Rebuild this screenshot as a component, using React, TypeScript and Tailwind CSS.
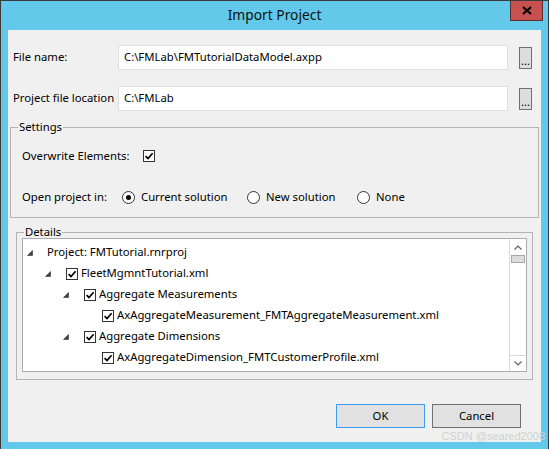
import React from 'react';

type Row = { level: number; expander: boolean; checkbox: boolean; text: string };

const rows: Row[] = [
  { level: 0, expander: true, checkbox: false, text: 'Project: FMTutorial.rnrproj' },
  { level: 1, expander: true, checkbox: true, text: 'FleetMgmntTutorial.xml' },
  { level: 2, expander: true, checkbox: true, text: 'Aggregate Measurements' },
  { level: 3, expander: false, checkbox: true, text: 'AxAggregateMeasurement_FMTAggregateMeasurement.xml' },
  { level: 2, expander: true, checkbox: true, text: 'Aggregate Dimensions' },
  { level: 3, expander: false, checkbox: true, text: 'AxAggregateDimension_FMTCustomerProfile.xml' },
  { level: 3, expander: false, checkbox: true, text: '' },
];

const indent = ['pl-0', 'pl-[18px]', 'pl-[36px]', 'pl-[54px]'];

function CheckBox() {
  return (
    <span className="flex h-[12px] w-[12px] shrink-0 items-center justify-center border border-[#333333] bg-white">
      <svg width="10" height="10" viewBox="0 0 10 10">
        <path d="M1.6 5.2 L4 7.6 L8.6 2.2" fill="none" stroke="#000" strokeWidth="1.7" />
      </svg>
    </span>
  );
}

function Radio({ on = false }: { on?: boolean }) {
  return (
    <span className="flex h-[13px] w-[13px] shrink-0 items-center justify-center rounded-full border border-[#333333] bg-white">
      {on && <span className="h-[5px] w-[5px] rounded-full bg-black" />}
    </span>
  );
}

function Expander() {
  return (
    <svg width="6" height="6" viewBox="0 0 6 6">
      <polygon points="5.5,0.5 5.5,5.5 0.5,5.5" fill="#444444" stroke="#333333" strokeWidth="0.6" />
    </svg>
  );
}

function Group({ title, className, children }: { title: string; className: string; children: React.ReactNode }) {
  return (
    <div className={`flex flex-col border border-[#b4b4b4] ${className}`}>
      <span className="-mt-[9px] ml-[7px] w-fit bg-[#f0f0f0] px-[1px] leading-[16px]">{title}</span>
      {children}
    </div>
  );
}

export default function App() {
  return (
    <div className="relative flex h-[449px] w-[549px] flex-col overflow-hidden border-x border-t border-[#3a3a3a] bg-[#63c9ea] font-['Noto_Sans',sans-serif] text-[11.3px] text-black">
      {/* タイトルバー */}
      <div className="relative flex h-[29px] shrink-0 items-center justify-center">
        <span className="text-[13.8px] text-[#111111]">Import Project</span>
        <button className="absolute right-[5px] top-0 flex h-[20px] w-[33px] items-center justify-center border-x border-b border-[#5a3030] bg-[#c75050]">
          <svg width="10" height="9" viewBox="0 0 10 9">
            <path d="M1 1 L9 8 M9 1 L1 8" stroke="#000" strokeWidth="2.2" />
          </svg>
        </button>
      </div>

      {/* クライアント領域 */}
      <div className="mx-[7px] flex h-[412px] flex-col bg-[#f0f0f0]">
        {/* ファイル名 */}
        <div className="mt-[15px] flex h-[25px] items-center">
          <span className="w-[110px] pl-[5px]">File name:</span>
          <div className="flex h-[25px] w-[390px] items-center border border-[#e0e0e0] bg-white pl-[5px]">
            C:\FMLab\FMTutorialDataModel.axpp
          </div>
          <button className="ml-[11px] flex h-[22px] w-[13px] items-end justify-center border border-[#707070] bg-[#dddddd] pb-[2px] leading-[10px]">
            ...
          </button>
        </div>

        {/* プロジェクトファイルの場所 */}
        <div className="mt-[16px] flex h-[25px] items-center">
          <span className="w-[110px] whitespace-nowrap pl-[5px]">Project file location</span>
          <div className="flex h-[25px] w-[390px] items-center border border-[#e0e0e0] bg-white pl-[5px]">
            C:\FMLab
          </div>
          <button className="ml-[11px] flex h-[22px] w-[13px] items-end justify-center border border-[#707070] bg-[#dddddd] pb-[2px] leading-[10px]">
            ...
          </button>
        </div>

        {/* 設定 */}
        <Group title="Settings" className="ml-[2px] mt-[16px] h-[91px] w-[529px]">
          <div className="ml-[11px] mt-[13px] flex h-[16px] items-center">
            <span className="w-[121px]">Overwrite Elements:</span>
            <CheckBox />
          </div>
          <div className="ml-[11px] mt-[25px] flex h-[16px] items-center">
            <span className="w-[100px]">Open project in:</span>
            <Radio on />
            <span className="ml-[6px] w-[106px]">Current solution</span>
            <Radio />
            <span className="ml-[6px] w-[91px]">New solution</span>
            <Radio />
            <span className="ml-[6px]">None</span>
          </div>
        </Group>

        {/* 詳細 */}
        <Group title="Details" className="ml-[8px] mt-[14px] h-[148px] w-[517px]">
          <div className="mx-[5px] mt-[-2px] flex h-[134px] overflow-hidden border border-[#abadb3] bg-white">
            <div className="flex-1 overflow-hidden pl-[4px] pt-[3px]">
              {rows.map((r, i) => (
                <div key={i} className={`flex h-[21px] items-center whitespace-nowrap ${indent[r.level]}`}>
                  <span className="flex w-[20px] shrink-0 items-center">{r.expander && <Expander />}</span>
                  {r.checkbox && (
                    <span className="ml-[1px] mr-[3px]">
                      <CheckBox />
                    </span>
                  )}
                  <span>{r.text}</span>
                </div>
              ))}
            </div>
            {/* スクロールバー */}
            <div className="flex w-[17px] shrink-0 flex-col border-l border-[#d9d9d9] bg-white">
              <div className="flex h-[16px] items-center justify-center">
                <svg width="8" height="5" viewBox="0 0 8 5">
                  <path d="M0.5 4.5 L4 1 L7.5 4.5" fill="none" stroke="#606060" strokeWidth="1.2" />
                </svg>
              </div>
              <div className="mx-[1px] h-[8px] border border-[#a8a8a8] bg-[#dcdcdc]" />
              <div className="flex-1" />
              <div className="flex h-[16px] items-center justify-center border-t border-[#d9d9d9]">
                <svg width="8" height="5" viewBox="0 0 8 5">
                  <path d="M0.5 0.5 L4 4 L7.5 0.5" fill="none" stroke="#606060" strokeWidth="1.2" />
                </svg>
              </div>
            </div>
          </div>
        </Group>

        {/* ボタン */}
        <div className="mt-[24px] flex">
          <button className="ml-[328px] h-[24px] w-[89px] border border-[#3c9cf0] bg-[#e1e1e1]">OK</button>
          <button className="ml-[7px] h-[24px] w-[89px] border border-[#707070] bg-[#e1e1e1]">Cancel</button>
        </div>
      </div>

      {/* 透かし */}
      <span className="absolute bottom-[5px] right-[3px] font-['Liberation_Sans',sans-serif] text-[11px] text-[#d0d0d0]">
        CSDN @seared2008
      </span>
    </div>
  );
}
